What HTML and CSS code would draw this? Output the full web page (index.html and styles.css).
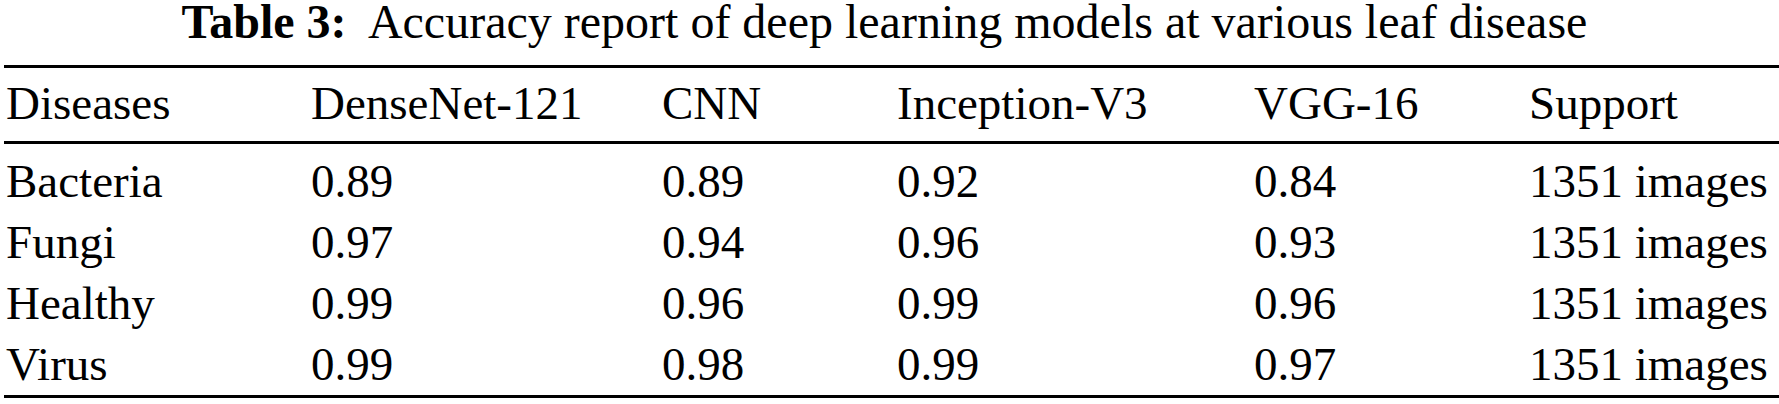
FILE: index.html
```html
<!DOCTYPE html>
<html lang="en">
<head>
    <meta charset="UTF-8">
    <meta name="viewport" content="width=device-width, initial-scale=1.0">
    <title>Table 3</title>
    <link rel="stylesheet" href="styles.css">
</head>
<body>

    <div class="table-wrap">
        <div class="caption"><b>Table 3:</b>&nbsp; Accuracy report of deep learning models at various leaf disease</div>

        <table class="report">
            <colgroup>
                <col class="c1">
                <col class="c2">
                <col class="c3">
                <col class="c4">
                <col class="c5">
                <col class="c6">
            </colgroup>
            <thead>
                <tr>
                    <th>Diseases</th>
                    <th>DenseNet-121</th>
                    <th>CNN</th>
                    <th>Inception-V3</th>
                    <th>VGG-16</th>
                    <th>Support</th>
                </tr>
            </thead>
            <tbody>
                <tr class="first">
                    <td>Bacteria</td>
                    <td>0.89</td>
                    <td>0.89</td>
                    <td>0.92</td>
                    <td>0.84</td>
                    <td>1351 images</td>
                </tr>
                <tr>
                    <td>Fungi</td>
                    <td>0.97</td>
                    <td>0.94</td>
                    <td>0.96</td>
                    <td>0.93</td>
                    <td>1351 images</td>
                </tr>
                <tr>
                    <td>Healthy</td>
                    <td>0.99</td>
                    <td>0.96</td>
                    <td>0.99</td>
                    <td>0.96</td>
                    <td>1351 images</td>
                </tr>
                <tr class="last">
                    <td>Virus</td>
                    <td>0.99</td>
                    <td>0.98</td>
                    <td>0.99</td>
                    <td>0.97</td>
                    <td>1351 images</td>
                </tr>
            </tbody>
        </table>
    </div>

</body>
</html>
```

FILE: styles.css
```css
* {
    margin: 0;
    padding: 0;
    box-sizing: border-box;
}

body {
    background: white;
    color: black;
    font-family: 'Liberation Serif', 'Times New Roman', serif;
    font-size: 47px;
    overflow: hidden;
}

/* Khung bảng */
.table-wrap {
    padding-left: 4px;
}

.caption {
    text-align: center;
    font-size: 48px;
    line-height: 44px;
    margin-bottom: 21px;
    padding-right: 14px;
    white-space: nowrap;
}

.caption b {
    font-weight: bold;
}

.report {
    width: 1775px;
    table-layout: fixed;
    border-collapse: separate;
    border-spacing: 0;
}

.report .c1 { width: 305px; }
.report .c2 { width: 351px; }
.report .c3 { width: 235px; }
.report .c4 { width: 357px; }
.report .c5 { width: 275px; }
.report .c6 { width: 252px; }

.report th,
.report td {
    text-align: left;
    font-weight: normal;
    line-height: 61px;
    padding-left: 2px;
    white-space: nowrap;
}

/* Đường kẻ trên và dưới tiêu đề */
.report th {
    border-top: 3px solid black;
    border-bottom: 3px solid black;
    padding-top: 5px;
    padding-bottom: 7px;
}

.report tr.first td {
    padding-top: 7px;
}

.report tr.last td {
    border-bottom: 3px solid black;
}
```
